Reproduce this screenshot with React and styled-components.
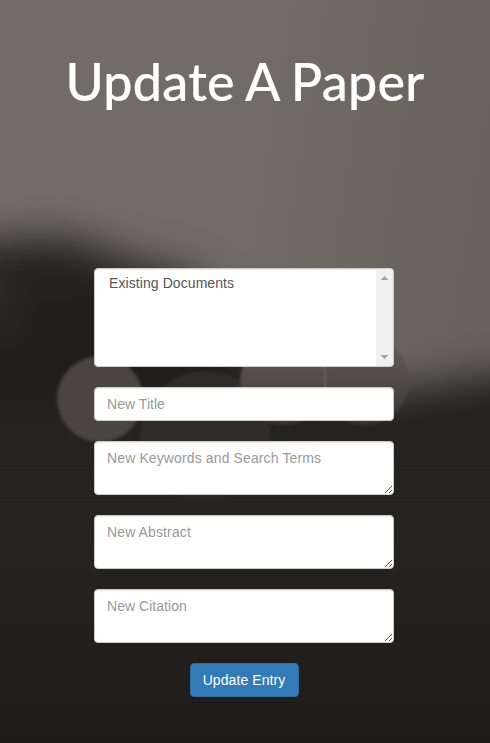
import React from "react";
import styled, { createGlobalStyle } from "styled-components";

const GlobalStyle = createGlobalStyle`
  * { box-sizing: border-box; }
  body {
    margin: 0;
    background: #23211f;
    font-family: "Liberation Sans", Arial, sans-serif;
    font-size: 14px;
    line-height: 20px;
  }
`;

const Page = styled.main`
  position: relative;
  isolation: isolate;
  display: flex;
  flex-direction: column;
  align-items: center;
  height: 743px;
  padding-top: 49px;
  overflow: hidden;
`;

const Backdrop = styled.svg`
  position: absolute;
  inset: 0;
  z-index: -1;
  width: 100%;
  height: 100%;
`;

const Title = styled.h1`
  margin: 0 0 155px;
  height: 64px;
  color: #fff;
  font-family: Lato, sans-serif;
  font-size: 52px;
  font-weight: 500;
  line-height: 64px;
  letter-spacing: 0.25px;
  word-spacing: -1.5px;
  -webkit-text-stroke: 0.2px #fff;
  white-space: nowrap;
`;

const Form = styled.form`
  display: flex;
  flex-direction: column;
  align-items: center;
  gap: 20px;
  width: 300px;
  margin-right: 2px;
`;

const Control = styled.div`
  position: relative;
  display: flex;
  width: 100%;
  height: ${(p) => p.$height}px;
  overflow: hidden;
  background: #fff;
  border: 1px solid #ccc;
  border-radius: 4px;
  box-shadow: inset 0 1px 1px rgba(0, 0, 0, 0.075);
`;

const Field = styled.input`
  flex: 1;
  margin: 0;
  padding: 6px 12px;
  border: 0;
  outline: 0;
  resize: none;
  overflow: hidden;
  background: transparent;
  color: #555;
  font: inherit;
  letter-spacing: ${(p) => p.$tracking ?? 0.04}px;
  &::placeholder { color: #999; opacity: 1; }
`;

const Options = styled.div`
  flex: 1;
  padding: 4px 14px;
  color: #555;
  letter-spacing: 0.08px;
`;

const ScrollTrack = styled.div`
  display: flex;
  flex-direction: column;
  align-items: center;
  justify-content: space-between;
  width: 17px;
  padding: 7px 0;
  background: #f0f0f0;
`;

const Arrow = styled.svg`
  display: block;
  width: 7px;
  height: 4px;
  fill: #a3a3a3;
  shape-rendering: crispEdges;
`;

const Grip = styled.svg`
  position: absolute;
  right: 1px;
  bottom: 1px;
  width: 7px;
  height: 7px;
  fill: #555;
`;

const SubmitButton = styled.button`
  width: 109px;
  height: 34px;
  padding: 0;
  border: 1px solid #2e6da4;
  border-radius: 4px;
  background: #337ab7;
  color: #fff;
  font: inherit;
  letter-spacing: 0.08px;
`;

const areas = [
  { label: "New Keywords and Search Terms", tracking: 0.12 },
  { label: "New Abstract", tracking: 0.12 },
  { label: "New Citation", tracking: 0.04 },
];

const gripDots = [
  [0, 6], [1, 5], [2, 4], [3, 3], [4, 2], [5, 1], [6, 0],
  [4, 6], [5, 5], [6, 4],
];

function BokehBackdrop() {
  return (
    <Backdrop viewBox="0 0 490 743" preserveAspectRatio="none" aria-hidden="true">
      <defs>
        <linearGradient id="wall" x1="0" y1="0" x2="1" y2="0.25">
          <stop offset="0" stopColor="#736d69" />
          <stop offset="0.55" stopColor="#716b67" />
          <stop offset="1" stopColor="#67625b" />
        </linearGradient>
        <linearGradient id="ground" x1="0" y1="240" x2="0" y2="743" gradientUnits="userSpaceOnUse">
          <stop offset="0" stopColor="#24221f" />
          <stop offset="0.28" stopColor="#211f1d" />
          <stop offset="0.45" stopColor="#282622" />
          <stop offset="0.7" stopColor="#242220" />
          <stop offset="1" stopColor="#1e1c1a" />
        </linearGradient>
        <linearGradient id="disc" x1="0" y1="0" x2="0" y2="1">
          <stop offset="0" stopColor="#645e5a" />
          <stop offset="0.5" stopColor="#504b47" />
          <stop offset="1" stopColor="#383532" />
        </linearGradient>
        <filter id="haze" filterUnits="userSpaceOnUse" x="-120" y="120" width="730" height="760" colorInterpolationFilters="sRGB">
          <feGaussianBlur stdDeviation="20" />
        </filter>
        <filter id="soft" x="-20%" y="-20%" width="140%" height="140%" colorInterpolationFilters="sRGB">
          <feGaussianBlur stdDeviation="1.5" />
        </filter>
      </defs>
      <rect width="490" height="743" fill="url(#wall)" />
      <path
        d="M-100 242 L0 242 C35 234 80 236 110 254 C150 270 185 266 215 298 C240 332 255 376 320 386 C380 396 425 388 490 376 L600 370 V860 H-100Z"
        fill="url(#ground)"
        filter="url(#haze)"
      />
      <ellipse cx="-8" cy="300" rx="18" ry="34" fill="#46423e" opacity="0.5" filter="url(#haze)" />
      <circle cx="205" cy="436" r="65" fill="#34312e" opacity="0.7" filter="url(#soft)" />
      <circle cx="100" cy="399" r="43" fill="#4a4542" filter="url(#soft)" />
      <circle cx="365" cy="381" r="44" fill="url(#disc)" filter="url(#soft)" />
      <circle cx="283" cy="382" r="43" fill="url(#disc)" filter="url(#soft)" />
      <path d="M322 362 Q328 378 324 393" fill="none" stroke="#6a6561" strokeWidth="2" filter="url(#soft)" />
      <path d="M-50 500 H540 V800 H-50Z" fill="url(#ground)" filter="url(#haze)" />
    </Backdrop>
  );
}

export default function App() {
  return (
    <>
      <GlobalStyle />
      <Page>
        <BokehBackdrop />
        <Title>Update A Paper</Title>
        <Form>
          <Control $height={99}>
            <Options role="listbox">
              <div role="option">Existing Documents</div>
            </Options>
            <ScrollTrack>
              <Arrow viewBox="0 0 7 4"><path d="M0 4V3H1V2H2V1H3V0H4V1H5V2H6V3H7V4Z" /></Arrow>
              <Arrow viewBox="0 0 7 4"><path d="M0 0V1H1V2H2V3H3V4H4V3H5V2H6V1H7V0Z" /></Arrow>
            </ScrollTrack>
          </Control>
          <Control $height={34}>
            <Field placeholder="New Title" />
          </Control>
          {areas.map(({ label, tracking }) => (
            <Control $height={54} key={label}>
              <Field as="textarea" placeholder={label} $tracking={tracking} />
              <Grip viewBox="0 0 7 7">
                {gripDots.map(([x, y]) => (
                  <rect key={`${x}-${y}`} x={x} y={y} width="1" height="1" />
                ))}
              </Grip>
            </Control>
          ))}
          <SubmitButton type="button">Update Entry</SubmitButton>
        </Form>
      </Page>
    </>
  );
}
